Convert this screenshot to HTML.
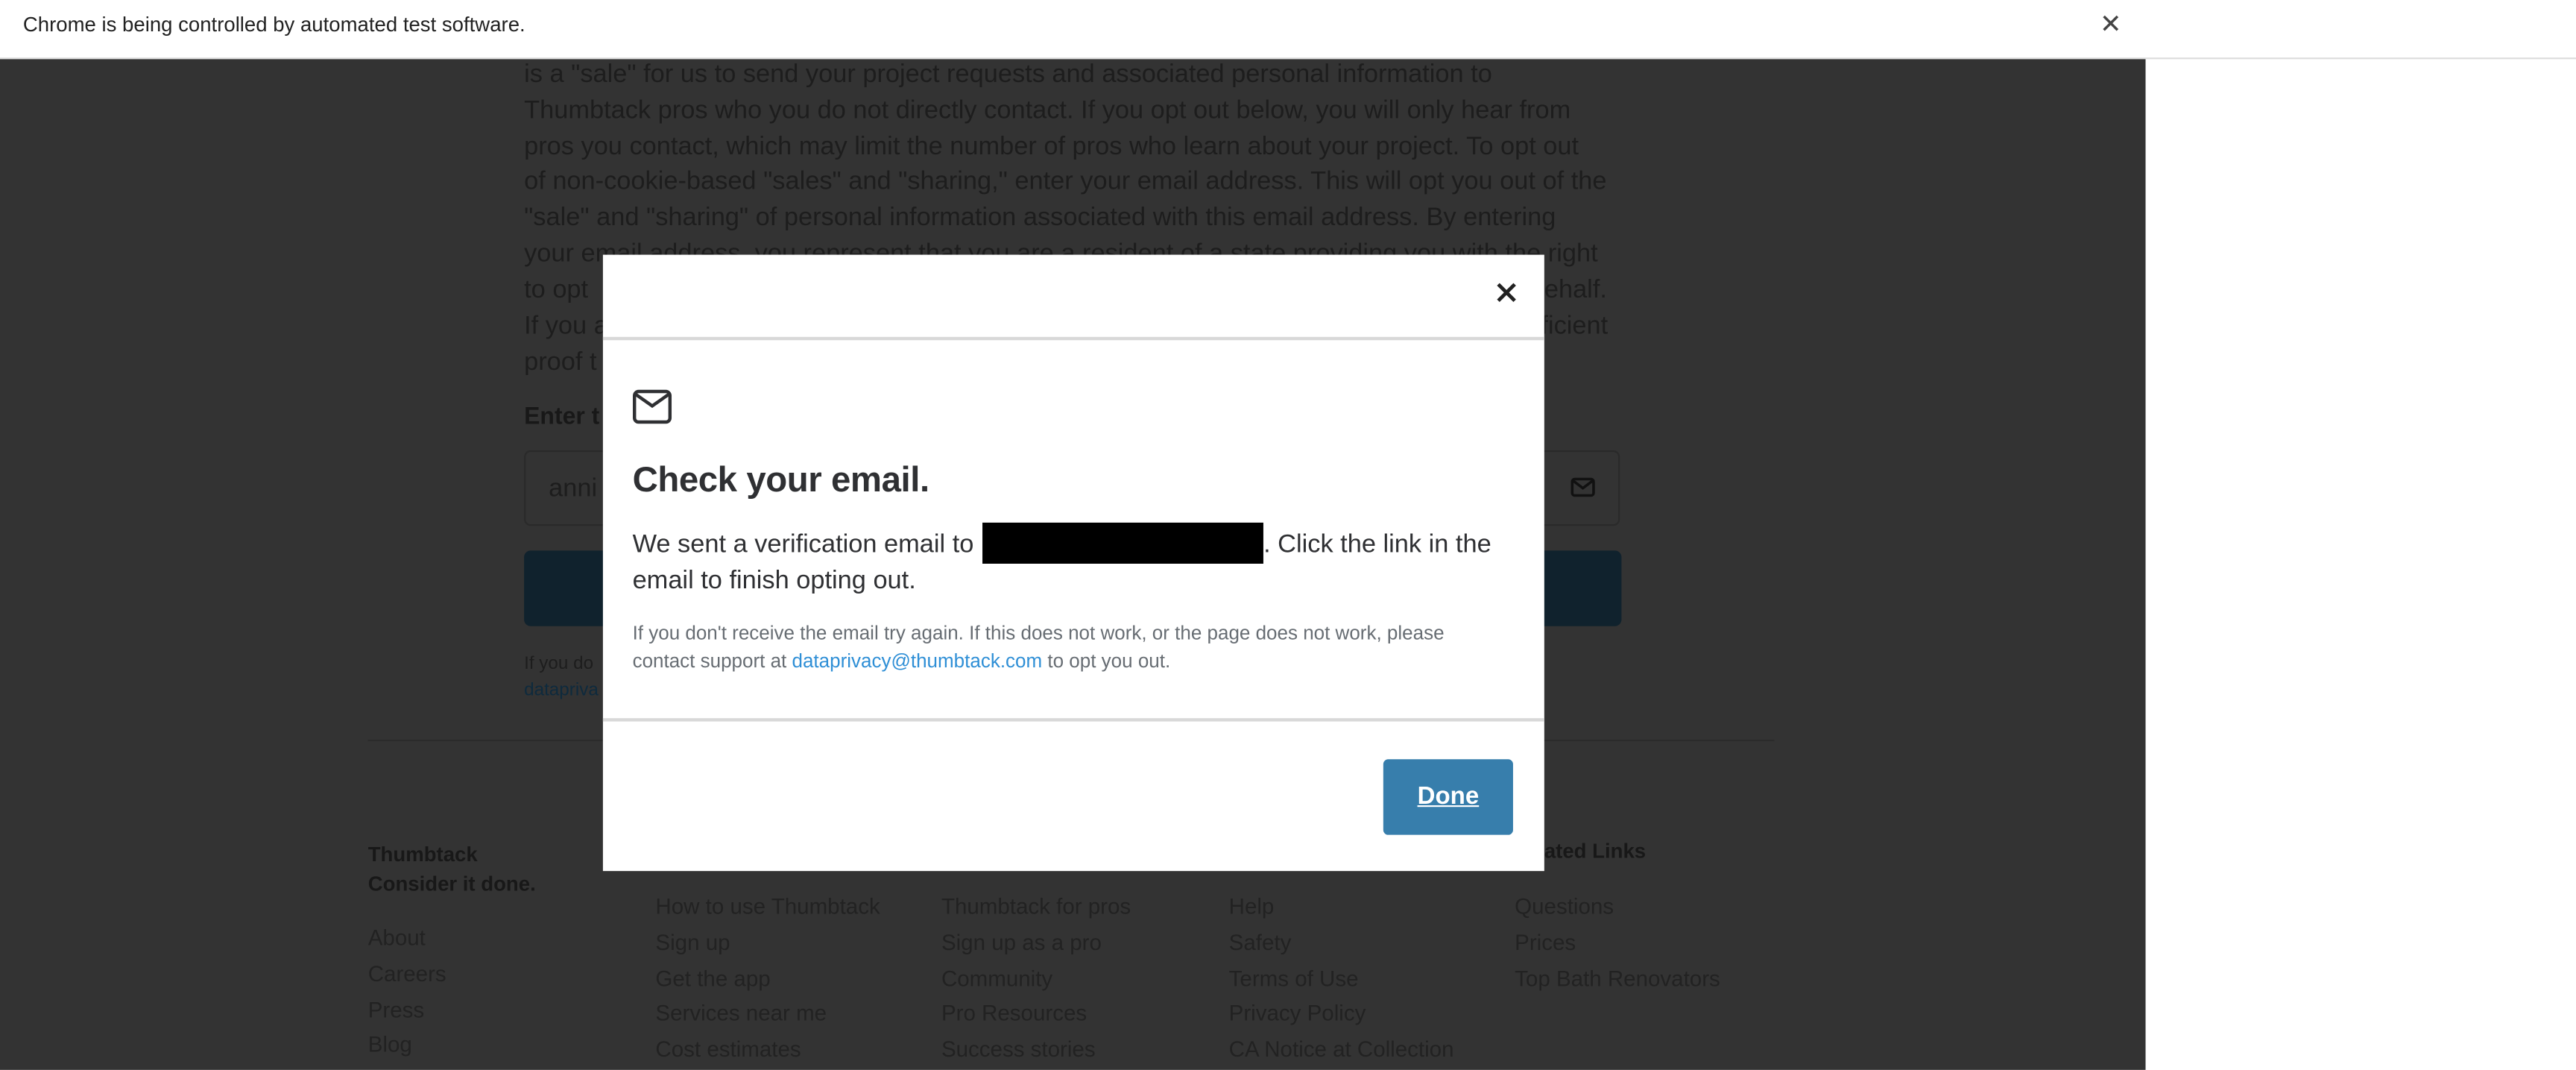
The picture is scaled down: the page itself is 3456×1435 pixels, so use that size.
<!DOCTYPE html>
<html><head><meta charset="utf-8"><style>
html,body{margin:0;padding:0;width:3456px;height:1435px;overflow:hidden;background:#fff;}
#w{position:absolute;left:0;top:0;width:1568px;height:651px;transform:scale(2.20408);transform-origin:0 0;font-family:"Liberation Sans",sans-serif;}
.a{position:absolute;white-space:nowrap;}
.bar{left:0;top:0;width:1568px;height:35px;background:#fff;border-bottom:1px solid #ddd;}
.pg{left:0;top:36px;width:1306px;height:615px;background:#333;}
.bt{color:#1d1d1d;font-size:15.6px;line-height:21.8px;}
.fl{color:#222;font-size:13.4px;}
.fh{color:#181818;font-size:12.5px;font-weight:bold;}
.modal{left:367px;top:155px;width:573px;height:375px;background:#fff;}
</style></head><body><div id="w">
<div class="a bar"></div>
<div class="a" style="left:14px;top:8px;font-size:12.5px;color:#222;">Chrome is being controlled by automated test software.</div>
<div class="a" style="left:1278px;top:5px;font-size:16px;color:#444;">✕</div>
<div class="a pg"></div>
<div class="a bt" style="left:319px;top:35px;">is a "sale" for us to send your project requests and associated personal information to<br>Thumbtack pros who you do not directly contact. If you opt out below, you will only hear from<br>pros you contact, which may limit the number of pros who learn about your project. To opt out<br>of non-cookie-based "sales" and "sharing," enter your email address. This will opt you out of the<br>"sale" and "sharing" of personal information associated with this email address. By entering<br>your email address, you represent that you are a resident of a state providing you with the right<br>to opt</div>
<div class="a bt" style="left:940px;top:166px;">ehalf.</div>
<div class="a bt" style="left:319px;top:188px;">If you a<br>proof t</div>
<div class="a bt" style="left:938px;top:188px;">ficient</div>
<div class="a" style="left:319px;top:246px;font-size:14.5px;font-weight:bold;color:#181818;">Enter t</div>
<div class="a" style="left:319px;top:274px;width:667px;height:46px;border:1px solid #2a2a2a;border-radius:4px;box-sizing:border-box;"></div>
<div class="a bt" style="left:334px;top:287px;">anni</div>
<svg class="a" style="left:956px;top:290px" width="15" height="13" viewBox="0 0 15 13"><rect x="1" y="1.5" width="13" height="10" rx="1.5" fill="none" stroke="#111" stroke-width="1.6"/><path d="M1.5 2.5 L7.5 7 L13.5 2.5" fill="none" stroke="#111" stroke-width="1.6"/></svg>
<div class="a" style="left:319px;top:335px;width:668px;height:46px;background:#10222d;border-radius:4px;"></div>
<div class="a" style="left:319px;top:398px;font-size:11px;color:#1d1d1d;">If you do</div>
<div class="a" style="left:319px;top:414px;font-size:11px;color:#0e2a3d;">datapriva</div>
<div class="a" style="left:224px;top:450px;width:856px;height:1px;background:#2b2b2b;"></div>
<div class="a fh" style="left:224px;top:511px;line-height:18px;">Thumbtack<br>Consider it done.</div>
<div class="a fh" style="left:940px;top:511px;">ated Links</div>
<div class="a fl" style="left:224px;top:560px;line-height:21.8px;">About<br>Careers<br>Press<br>Blog</div>
<div class="a fl" style="left:399px;top:541px;line-height:21.8px;">How to use Thumbtack<br>Sign up<br>Get the app<br>Services near me<br>Cost estimates</div>
<div class="a fl" style="left:573px;top:541px;line-height:21.8px;">Thumbtack for pros<br>Sign up as a pro<br>Community<br>Pro Resources<br>Success stories</div>
<div class="a fl" style="left:748px;top:541px;line-height:21.8px;">Help<br>Safety<br>Terms of Use<br>Privacy Policy<br>CA Notice at Collection</div>
<div class="a fl" style="left:922px;top:541px;line-height:21.8px;">Questions<br>Prices<br>Top Bath Renovators</div>
<div class="a modal"></div>
<svg class="a" style="left:910px;top:171px" width="14" height="14" viewBox="0 0 14 14"><path d="M2 2L12 12M12 2L2 12" stroke="#222" stroke-width="2.2"/></svg>
<div class="a" style="left:367px;top:205px;width:573px;height:2px;background:#d8d8d8;"></div>
<svg class="a" style="left:385px;top:237px" width="24" height="21" viewBox="0 0 24 21"><rect x="1.2" y="1.2" width="21.6" height="18.6" rx="2.5" fill="none" stroke="#2f3033" stroke-width="2"/><path d="M2 3 L12 10 L22 3" fill="none" stroke="#2f3033" stroke-width="2"/></svg>
<div class="a" style="left:385px;top:280px;font-size:21.5px;font-weight:bold;color:#2f3033;letter-spacing:-0.2px;">Check your email.</div>
<div class="a" style="left:385px;top:318px;font-size:15.6px;line-height:22px;color:#2f3033;">We sent a verification email to <span style="display:inline-block;width:171px;height:25px;background:#000;vertical-align:-7px;margin-left:1px;"></span>. Click the link in the<br>email to finish opting out.</div>
<div class="a" style="left:385px;top:377px;font-size:11.8px;line-height:16.5px;color:#676d73;">If you don't receive the email try again. If this does not work, or the page does not work, please<br>contact support at <span style="color:#2f8fd6;">dataprivacy@thumbtack.com</span> to opt you out.</div>
<div class="a" style="left:367px;top:437px;width:573px;height:2px;background:#d8d8d8;"></div>
<div class="a" style="left:842px;top:462px;width:79px;height:46px;background:#377eac;border-radius:3px;color:#fff;font-weight:bold;font-size:15px;text-decoration:underline;text-align:center;line-height:46px;">Done</div>
</div></body></html>
